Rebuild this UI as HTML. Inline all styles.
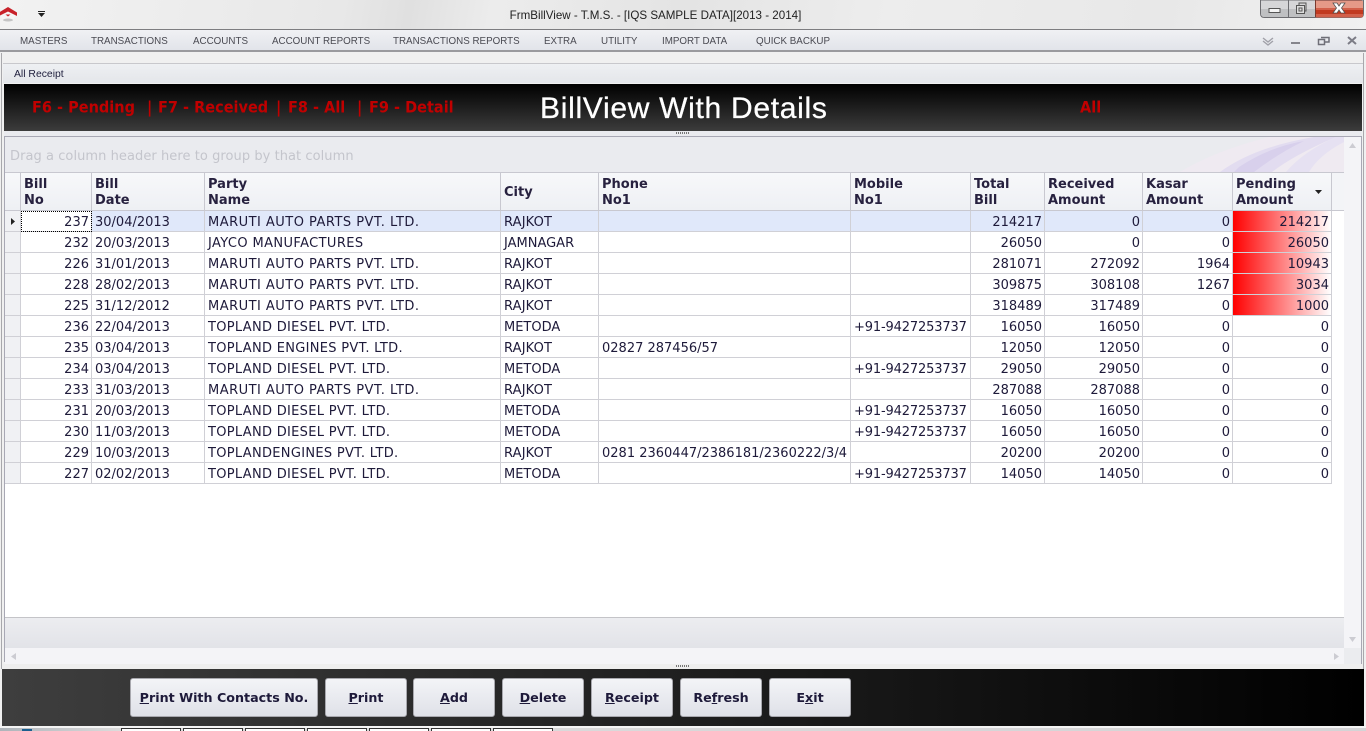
<!DOCTYPE html>
<html><head><meta charset="utf-8"><title>FrmBillView</title>
<style>
html,body{margin:0;padding:0;width:1366px;height:731px;overflow:hidden;background:#f0f0f0}
body{position:relative;font-family:"DejaVu Sans",Verdana,sans-serif;color:#1e1a3a}
.a{position:absolute}
#tb{left:0;top:0;width:1366px;height:29px;background:linear-gradient(100deg,#f2f2f2 0,#e8e8e8 25%,#e0e0e0 30%,#ececec 36%,#e4e4e4 50%,#ededed 65%,#e8e8e8 85%,#f1f1f1 100%)}
#ttl{left:0;width:1311px;top:8px;text-align:center;font:11.6px/15px "Liberation Sans",sans-serif;color:#222}
#mn{left:0;top:29px;width:1366px;background:linear-gradient(#f0f1f4,#e2e4ea);border-top:1px solid #7d7d80;border-bottom:2px solid #9a9a9e;box-sizing:content-box;height:20px}
.m{position:absolute;top:36px;font:9.8px/12px "Liberation Sans",sans-serif;color:#4a4a52;white-space:nowrap}
#tab{left:3px;top:63px;width:1360px;height:20px;background:linear-gradient(#eef0f3,#e4e6ea);border-top:1px solid #c8c8cc;box-sizing:border-box}
#hd{left:4px;top:84px;width:1358px;height:47px;background:linear-gradient(#000,#3c3c3c)}
.r{position:absolute;top:98px;font:bold 14.5px/20px "DejaVu Sans",sans-serif;color:#c00000;white-space:pre;transform:scaleY(1.1)}
#grp{left:5px;top:137px;width:1339px;height:35px;background:#eaebef;overflow:hidden}
table{position:absolute;left:5px;top:172px;border-collapse:separate;border-spacing:0;table-layout:fixed;width:1327px;font:13px/15px "DejaVu Sans",sans-serif;color:#1e1a3a}
th{padding:3px 0 0 3px;box-sizing:border-box;text-align:left;vertical-align:middle;background:linear-gradient(#f7f8fa,#eef0f4);border-right:1px solid #c8c8d0;border-bottom:1px solid #c8c8d0;border-top:1px solid #c8c8d0;font-weight:bold;line-height:16px;color:#27213f;position:relative;height:39px}
td{height:21px;box-sizing:border-box;padding:4px 3px 0;vertical-align:top;border-right:1px solid #d0d0d6;border-bottom:1px solid #d0d0d6;white-space:nowrap;overflow:hidden;background:#fff;line-height:15px}
td.n{text-align:right;padding-right:2px}
td.i{background:#f0f1f4;padding:0;vertical-align:middle}
td.p{letter-spacing:.3px}
td.q{letter-spacing:.48px}
td.j{letter-spacing:.39px}
td.c{letter-spacing:.15px}
td.o{letter-spacing:-.15px}
tr.s td{background:#e0e8fa}
tr.s td.i{background:#f0f1f4}
tr.s td.f{background:#fff;outline:1px dotted #000;outline-offset:-1px}
td.g,tr.s td.g{background:linear-gradient(90deg,#f00,#fff)}
.b{position:absolute;top:678px;height:39px;box-sizing:border-box;border:1px solid #a8a8ae;border-radius:3px;background:linear-gradient(#f3f4f7,#dfe1e8);text-align:center;font:bold 12.7px/38px "DejaVu Sans",sans-serif;color:#1e1a3a}
.b u{text-decoration:underline}
</style></head><body>
<div class="a" id="tb"></div>
<svg class="a" style="left:0;top:3px" width="20" height="20" viewBox="0 0 20 20"><ellipse cx="8" cy="13" rx="7" ry="5" fill="#f6f6f6"/><ellipse cx="8" cy="17" rx="5" ry="1.5" fill="#c4c4c4"/><path d="M-1 9.5 L8 4 L17 9.5 L17 13 L13 11 L8 8.5 L3 11 L-1 13Z" fill="#c8222a"/><path d="M5.5 11.5 H10.5 L8 13.5Z" fill="#c8222a"/></svg>
<svg class="a" style="left:38px;top:11px" width="8" height="7"><path d="M0 0H7V1H0ZM0 2H7L3.5 6Z" fill="#222"/></svg>
<div class="a" id="ttl">FrmBillView - T.M.S. - [IQS SAMPLE DATA][2013 - 2014]</div>
<svg class="a" style="left:1260px;top:0" width="104" height="18" viewBox="0 0 104 18">
<path d="M0.5 0V13.5Q0.5 17.5 4.5 17.5H100Q103.5 17.5 103.5 13.5V0Z" fill="#d6d6d8" stroke="#6c6c70"/>
<path d="M1 9H55V17H4Q1 17 1 13Z" fill="#bfc0c2"/>
<rect x="55" y="0.5" width="48" height="17" rx="2" fill="#d2604a"/><rect x="56" y="1" width="47" height="7" fill="#e59a88"/><rect x="56" y="10" width="47" height="4" fill="#c23a20"/>
<path d="M28.5 0V17" stroke="#6c6c70"/><path d="M55.5 0V17" stroke="#7a3a2e"/>
<rect x="9" y="8.5" width="11" height="4" fill="#f4f4f4" stroke="#555"/>
<rect x="36.5" y="5.5" width="8" height="8" fill="#ddd" stroke="#555"/><path d="M39 5V3H46V11H45" fill="none" stroke="#555"/><rect x="39" y="8" width="3" height="3" fill="none" stroke="#555"/>
<path d="M73 3H77L79 6L81 3H85L81.5 8L85 13H81L79 10L77 13H73L76.5 8Z" fill="#fff" stroke="#555" stroke-width=".8"/>
</svg>
<div class="a" id="mn"></div>
<div class="m" style="left:20px">MASTERS</div><div class="m" style="left:91px">TRANSACTIONS</div><div class="m" style="left:193px">ACCOUNTS</div><div class="m" style="left:272px">ACCOUNT REPORTS</div><div class="m" style="left:393px">TRANSACTIONS REPORTS</div><div class="m" style="left:544px">EXTRA</div><div class="m" style="left:601px">UTILITY</div><div class="m" style="left:662px">IMPORT DATA</div><div class="m" style="left:756px">QUICK BACKUP</div>
<svg class="a" style="left:1260px;top:35px" width="100" height="13" viewBox="0 0 100 13" fill="none">
<path d="M3 3L8 7L13 3M3 6L8 10L13 6" stroke="#a0a0a8" stroke-width="1.4"/>
<path d="M31 8H40" stroke="#85858c" stroke-width="2"/>
<rect x="58.5" y="4.5" width="6" height="5" stroke="#6f6f78" stroke-width="1.5"/><path d="M61 2.5H69V7H65" stroke="#6f6f78" stroke-width="1.5"/>
<path d="M88 2L96 9M96 2L88 9" stroke="#7c7c86" stroke-width="2"/>
</svg>
<div class="a" style="left:1px;top:53px;width:1px;height:616px;background:#a8a8ac"></div>
<div class="a" style="left:1363px;top:53px;width:1px;height:616px;background:#a8a8ac"></div>
<div class="a" id="tab"></div>
<div class="a" style="left:14px;top:68px;font:10.4px/13px 'Liberation Sans',sans-serif;color:#1e1e3c">All Receipt</div>
<div class="a" id="hd"></div>
<div class="r" style="left:32px">F6 - Pending</div>
<div class="r" style="left:147px">|</div>
<div class="r" style="left:158px">F7 - Received</div>
<div class="r" style="left:276px">|</div>
<div class="r" style="left:288px">F8 - All</div>
<div class="r" style="left:357px">|</div>
<div class="r" style="left:369px">F9 - Detail</div>
<div class="a" style="left:540px;top:92px;font:30px/34px 'Liberation Sans',sans-serif;letter-spacing:.7px;-webkit-text-stroke:.3px #fff;color:#fff;white-space:nowrap">BillView With Details</div>
<div class="r" style="left:1080px">All</div>
<div class="a" style="left:4px;top:131px;width:1358px;height:5px;background:#eaebef"></div>
<div class="a" style="left:676px;top:132px;width:13px;height:2px;background:repeating-linear-gradient(90deg,#777 0 1px,transparent 1px 2px)"></div>
<div class="a" style="left:4px;top:136px;width:1358px;height:1px;background:#a8a8b4"></div>
<div class="a" style="left:4px;top:136px;width:1px;height:526px;background:#a8a8b4"></div>
<div class="a" style="left:5px;top:172px;width:1339px;height:445px;background:#fff"></div>
<div class="a" id="grp">
<svg class="a" style="left:1139px;top:0" width="200" height="35" viewBox="0 0 200 35"><path d="M36 35Q70 14 125 0H200V35Z" fill="#efeaf1"/><path d="M76 35Q110 10 170 0H192Q150 18 128 35Z" fill="#e2dcf0"/><path d="M95 30Q125 10 160 4Q135 16 110 35H90Z" fill="#d8d0ec"/><path d="M142 35Q160 14 192 0H200V5Q175 18 165 35Z" fill="#e6e1f2"/></svg>
<div class="a" style="left:5px;top:12px;font:13px/16px 'DejaVu Sans',sans-serif;letter-spacing:.06px;color:#c4c5cc;white-space:nowrap">Drag a column header here to group by that column</div>
</div>
<table>
<colgroup><col style="width:16px"><col style="width:71px"><col style="width:113px"><col style="width:296px"><col style="width:98px"><col style="width:252px"><col style="width:120px"><col style="width:74px"><col style="width:98px"><col style="width:90px"><col style="width:99px"></colgroup>
<tr><th></th><th>Bill<br>No</th><th>Bill<br>Date</th><th>Party<br>Name</th><th>City</th><th>Phone<br>No1</th><th>Mobile<br>No1</th><th>Total<br>Bill</th><th>Received<br>Amount</th><th>Kasar<br>Amount</th><th>Pending<br>Amount<svg style="position:absolute;right:9px;top:17px" width="7" height="4"><path d="M0 0H7L3.5 4Z" fill="#222"/></svg></th></tr>
<tr class="s"><td class="i"><svg style="display:block;margin-left:6px" width="4" height="7"><path d="M0 0L4 3.5L0 7Z" fill="#222"/></svg></td><td class="n f">237</td><td>30/04/2013</td><td class="q">MARUTI AUTO PARTS PVT. LTD.</td><td class="c">RAJKOT</td><td></td><td></td><td class="n">214217</td><td class="n">0</td><td class="n">0</td><td class="n g">214217</td></tr>
<tr><td class="i"></td><td class="n">232</td><td>20/03/2013</td><td class="j">JAYCO MANUFACTURES</td><td>JAMNAGAR</td><td></td><td></td><td class="n">26050</td><td class="n">0</td><td class="n">0</td><td class="n g">26050</td></tr>
<tr><td class="i"></td><td class="n">226</td><td>31/01/2013</td><td class="q">MARUTI AUTO PARTS PVT. LTD.</td><td class="c">RAJKOT</td><td></td><td></td><td class="n">281071</td><td class="n">272092</td><td class="n">1964</td><td class="n g">10943</td></tr>
<tr><td class="i"></td><td class="n">228</td><td>28/02/2013</td><td class="q">MARUTI AUTO PARTS PVT. LTD.</td><td class="c">RAJKOT</td><td></td><td></td><td class="n">309875</td><td class="n">308108</td><td class="n">1267</td><td class="n g">3034</td></tr>
<tr><td class="i"></td><td class="n">225</td><td>31/12/2012</td><td class="q">MARUTI AUTO PARTS PVT. LTD.</td><td class="c">RAJKOT</td><td></td><td></td><td class="n">318489</td><td class="n">317489</td><td class="n">0</td><td class="n g">1000</td></tr>
<tr><td class="i"></td><td class="n">236</td><td>22/04/2013</td><td class="p">TOPLAND DIESEL PVT. LTD.</td><td>METODA</td><td></td><td class="o">+91-9427253737</td><td class="n">16050</td><td class="n">16050</td><td class="n">0</td><td class="n">0</td></tr>
<tr><td class="i"></td><td class="n">235</td><td>03/04/2013</td><td class="p">TOPLAND ENGINES PVT. LTD.</td><td class="c">RAJKOT</td><td>02827 287456/57</td><td></td><td class="n">12050</td><td class="n">12050</td><td class="n">0</td><td class="n">0</td></tr>
<tr><td class="i"></td><td class="n">234</td><td>03/04/2013</td><td class="p">TOPLAND DIESEL PVT. LTD.</td><td>METODA</td><td></td><td class="o">+91-9427253737</td><td class="n">29050</td><td class="n">29050</td><td class="n">0</td><td class="n">0</td></tr>
<tr><td class="i"></td><td class="n">233</td><td>31/03/2013</td><td class="q">MARUTI AUTO PARTS PVT. LTD.</td><td class="c">RAJKOT</td><td></td><td></td><td class="n">287088</td><td class="n">287088</td><td class="n">0</td><td class="n">0</td></tr>
<tr><td class="i"></td><td class="n">231</td><td>20/03/2013</td><td class="p">TOPLAND DIESEL PVT. LTD.</td><td>METODA</td><td></td><td class="o">+91-9427253737</td><td class="n">16050</td><td class="n">16050</td><td class="n">0</td><td class="n">0</td></tr>
<tr><td class="i"></td><td class="n">230</td><td>11/03/2013</td><td class="p">TOPLAND DIESEL PVT. LTD.</td><td>METODA</td><td></td><td class="o">+91-9427253737</td><td class="n">16050</td><td class="n">16050</td><td class="n">0</td><td class="n">0</td></tr>
<tr><td class="i"></td><td class="n">229</td><td>10/03/2013</td><td class="p">TOPLANDENGINES PVT. LTD.</td><td class="c">RAJKOT</td><td>0281 2360447/2386181/2360222/3/4</td><td></td><td class="n">20200</td><td class="n">20200</td><td class="n">0</td><td class="n">0</td></tr>
<tr><td class="i"></td><td class="n">227</td><td>02/02/2013</td><td class="p">TOPLAND DIESEL PVT. LTD.</td><td>METODA</td><td></td><td class="o">+91-9427253737</td><td class="n">14050</td><td class="n">14050</td><td class="n">0</td><td class="n">0</td></tr>
</table>
<div class="a" style="left:1332px;top:172px;width:12px;height:39px;box-sizing:border-box;background:#f3f4f7;border-top:1px solid #c8c8d0;border-bottom:1px solid #c8c8d0"></div>
<div class="a" style="left:1344px;top:137px;width:17px;height:527px;background:#f4f4f7"></div>
<svg class="a" style="left:1349px;top:143px" width="8" height="5"><path d="M0 5H7L3.5 0Z" fill="#ccccd2"/></svg>
<svg class="a" style="left:1349px;top:637px" width="8" height="5"><path d="M0 0H7L3.5 5Z" fill="#ccccd2"/></svg>
<div class="a" style="left:1361px;top:137px;width:1px;height:527px;background:#a8a8b4"></div>
<div class="a" style="left:5px;top:617px;width:1339px;height:31px;background:linear-gradient(#ecedf0,#e2e3e8);border-top:1px solid #c4c4c8;box-sizing:border-box"></div>
<div class="a" style="left:5px;top:648px;width:1339px;height:16px;background:#f4f4f7"></div>
<div class="a" style="left:1344px;top:648px;width:17px;height:16px;background:#ebecef"></div>
<svg class="a" style="left:11px;top:653px" width="5" height="8"><path d="M5 0V7L0 3.5Z" fill="#ccccd2"/></svg>
<svg class="a" style="left:1334px;top:653px" width="5" height="8"><path d="M0 0V7L5 3.5Z" fill="#ccccd2"/></svg>
<div class="a" style="left:2px;top:664px;width:1361px;height:5px;background:#eeeeee"></div>
<div class="a" style="left:676px;top:665px;width:13px;height:2px;background:repeating-linear-gradient(90deg,#777 0 1px,transparent 1px 2px)"></div>
<div class="a" style="left:2px;top:669px;width:1362px;height:57px;background:linear-gradient(90deg,#3e3e3e,#000)"></div>
<div class="b" style="left:130px;width:188px"><u>P</u>rint With Contacts No.</div>
<div class="b" style="left:325px;width:82px"><u>P</u>rint</div>
<div class="b" style="left:413px;width:82px"><u>A</u>dd</div>
<div class="b" style="left:502px;width:82px"><u>D</u>elete</div>
<div class="b" style="left:591px;width:82px"><u>R</u>eceipt</div>
<div class="b" style="left:680px;width:82px">Re<u>f</u>resh</div>
<div class="b" style="left:769px;width:82px">E<u>x</u>it</div>
<div class="a" style="left:0;top:726px;width:1366px;height:2px;background:#f4f4f4"></div>
<div class="a" style="left:0;top:728px;width:1366px;height:3px;background:linear-gradient(90deg,#aeb4ba,#dcdcdc 120px,#d4d4d6)"></div>
<div class="a" style="left:22px;top:729px;width:10px;height:2px;background:#1b5f8f"></div>
<div class="a" style="left:121px;top:728px;width:60px;height:3px;background:#fff;border:solid #333;border-width:1px 1px 0;box-sizing:border-box"></div>
<div class="a" style="left:183px;top:728px;width:60px;height:3px;background:#fff;border:solid #333;border-width:1px 1px 0;box-sizing:border-box"></div>
<div class="a" style="left:245px;top:728px;width:60px;height:3px;background:#fff;border:solid #333;border-width:1px 1px 0;box-sizing:border-box"></div>
<div class="a" style="left:307px;top:728px;width:60px;height:3px;background:#fff;border:solid #333;border-width:1px 1px 0;box-sizing:border-box"></div>
<div class="a" style="left:369px;top:728px;width:60px;height:3px;background:#fff;border:solid #333;border-width:1px 1px 0;box-sizing:border-box"></div>
<div class="a" style="left:431px;top:728px;width:60px;height:3px;background:#fff;border:solid #333;border-width:1px 1px 0;box-sizing:border-box"></div>
<div class="a" style="left:493px;top:728px;width:60px;height:3px;background:#fff;border:solid #333;border-width:1px 1px 0;box-sizing:border-box"></div>
</body></html>
